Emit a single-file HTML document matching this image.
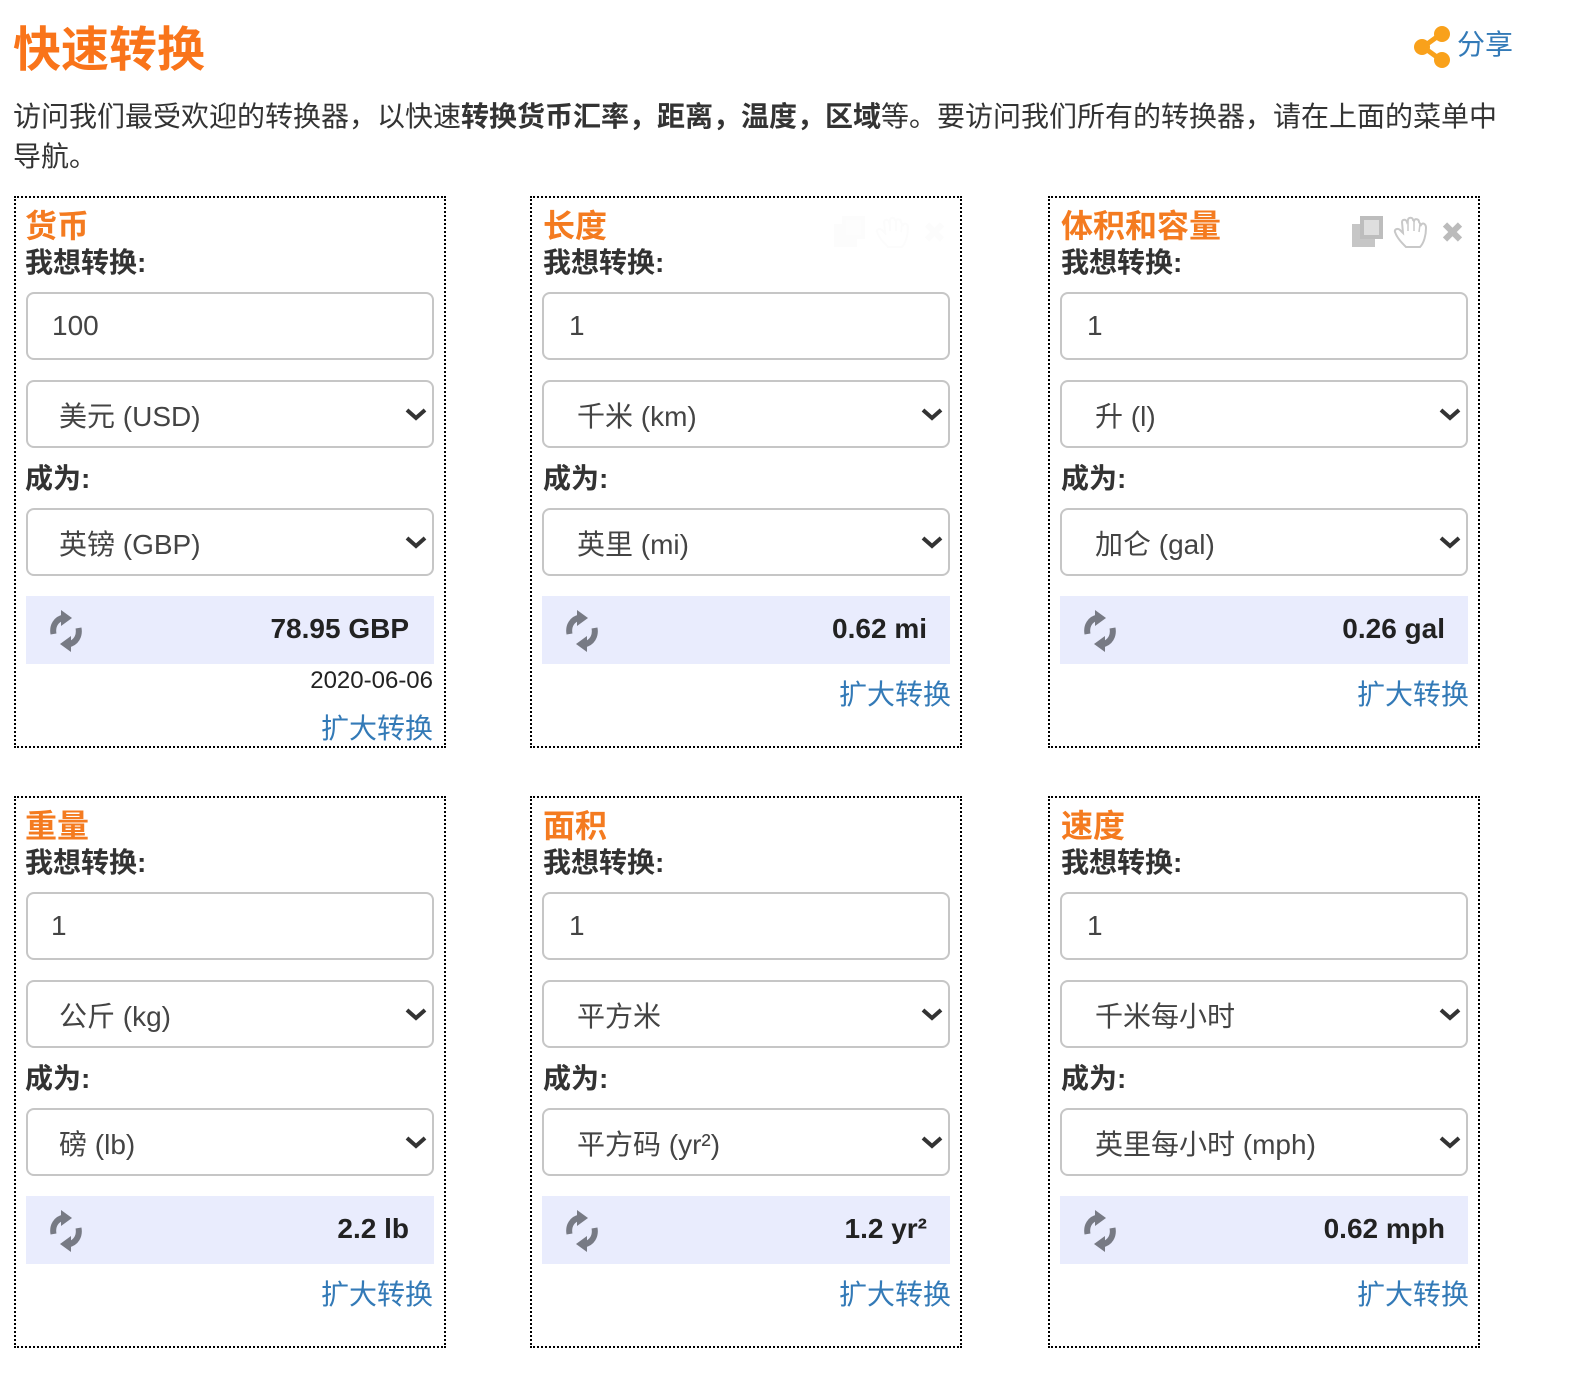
<!DOCTYPE html>
<html lang="zh"><head><meta charset="utf-8"><title>快速转换</title>
<style>
html,body{margin:0;padding:0;background:#fff}
body{width:1574px;height:1382px;position:relative;overflow:hidden;font-family:"Liberation Sans","Noto Sans CJK SC",sans-serif;color:#333}
.a{position:absolute;white-space:nowrap}
h1{position:absolute;margin:0;left:13px;top:22px;font-size:48px;line-height:58px;font-weight:700;color:#f9741a}
.share{left:1457px;top:25px;font-size:28px;line-height:40px;color:#337ab7}
.intro{left:13px;top:97px;width:1505px;font-size:28px;line-height:40px;white-space:normal;color:#333}
.box{position:absolute;width:428px;height:548px;border:2px dotted #000}
.box>*{position:absolute;white-space:nowrap}
.t{left:9px;top:8px;font-size:32px;line-height:40px;font-weight:700;color:#f47b20}
.l{left:9px;font-size:28px;line-height:40px;font-weight:700;color:#333}
.c{left:10px;width:404px;height:64px;border:2px solid #c6c6c6;border-radius:8px;background:#fff;font-size:28px;line-height:64px;color:#444}
.in{text-indent:24px}
.se{height:64px;line-height:70px;text-indent:31px}
.chev{position:absolute;left:377px;top:25px;width:22px;height:14px}
.r{left:10px;top:398px;width:383px;padding-right:25px;height:68px;background:#e9ecfd;text-align:right;font-size:28px;line-height:66px;font-weight:700;color:#222}
.ic{position:absolute;left:24px;top:14px;width:32px;height:42px}
.d{right:11px;top:465px;font-size:24px;line-height:36px;color:#222}
.k{right:9px;top:477px;font-size:28px;line-height:40px;color:#337ab7}
.c2 .t,.c2 .l{left:11px}
.c2 .in{text-indent:25px}
.c2 .se{text-indent:33px}
.c2 .r{width:385px;padding-right:23px}
.c1 .k{right:11px}
.c1 .k.x{top:511px}
</style></head><body>
<svg width="0" height="0" style="position:absolute"><defs>
<g id="chev"><path d="M2 3l9 8 9-8" fill="none" stroke="#333" stroke-width="4"/></g>
<g id="sync">
<path d="M3.500 24C2 16 6 9 14 7.500" fill="none" stroke="#777a84" stroke-width="6"/>
<path d="M11 0L22 8 11 16z" fill="#777a84"/>
<path d="M28.500 18C30 26 26 33 18 34.500" fill="none" stroke="#777a84" stroke-width="6"/>
<path d="M21 42L10 34 21 26z" fill="#777a84"/>
</g>
<g id="tools">
<rect x="4" y="12" width="23" height="23" fill="#c6c6c6"/>
<rect x="12" y="4" width="23" height="23" fill="#bdbdbd"/>
<rect x="16" y="8" width="15" height="15" fill="#dedede"/>
<path d="M58 35C54 31 49 26 47 20 46 17 50 16 52 18L55 21 54 10C54 7 58 7 59 10L60 8C60 5 65 5 65 8L66 9C67 6 71 7 71 10L73 13C75 10 78 12 78 16 78 23 76 31 72 35Z" fill="#fff" stroke="#c8c8c8" stroke-width="2"/>
<path d="M60 9V19M66 9V19M72 12L71 20" fill="none" stroke="#c8c8c8" stroke-width="1.500"/>
<path d="M97 12.500L112 27.500M112 12.500L97 27.500" stroke="#bbb" stroke-width="6"/>
</g>
</defs></svg>

<h1>快速转换</h1>
<svg class="a" style="left:1413px;top:24px" width="40" height="46" viewBox="0 0 40 46"><path d="M10 23L28 10M10 23l18 13" stroke="#f9a11b" stroke-width="5"/><circle cx="29" cy="10" r="8" fill="#f9a11b"/><circle cx="9" cy="23" r="8" fill="#f9a11b"/><circle cx="29" cy="36" r="8" fill="#f9a11b"/></svg>
<div class="a share">分享</div>
<div class="a intro">访问我们最受欢迎的转换器，以快速<b>转换货币汇率，距离，温度，区域</b>等。要访问我们所有的转换器，请在上面的菜单中导航。</div>

<div class="box c1" style="left:14px;top:196px">
<div class="t">货币</div><div class="l" style="top:45px">我想转换:</div>
<div class="c in" style="top:94px">100</div>
<div class="c se" style="top:182px">美元 (USD)<svg class="chev"><use href="#chev"/></svg></div>
<div class="l" style="top:261px">成为:</div>
<div class="c se" style="top:310px">英镑 (GBP)<svg class="chev"><use href="#chev"/></svg></div>
<div class="r"><svg class="ic"><use href="#sync"/></svg>78.95 GBP</div>
<div class="d">2020-06-06</div><div class="k x">扩大转换</div>
</div>

<div class="box c2" style="left:530px;top:196px">
<div class="t">长度</div><div class="l" style="top:45px">我想转换:</div>
<svg style="left:298px;top:14px;opacity:.04" width="120" height="40"><use href="#tools"/></svg>
<div class="c in" style="top:94px">1</div>
<div class="c se" style="top:182px">千米 (km)<svg class="chev"><use href="#chev"/></svg></div>
<div class="l" style="top:261px">成为:</div>
<div class="c se" style="top:310px">英里 (mi)<svg class="chev"><use href="#chev"/></svg></div>
<div class="r"><svg class="ic"><use href="#sync"/></svg>0.62 mi</div>
<div class="k">扩大转换</div>
</div>

<div class="box c2" style="left:1048px;top:196px">
<div class="t">体积和容量</div><div class="l" style="top:45px">我想转换:</div>
<svg style="left:298px;top:14px" width="120" height="40"><use href="#tools"/></svg>
<div class="c in" style="top:94px">1</div>
<div class="c se" style="top:182px">升 (l)<svg class="chev"><use href="#chev"/></svg></div>
<div class="l" style="top:261px">成为:</div>
<div class="c se" style="top:310px">加仑 (gal)<svg class="chev"><use href="#chev"/></svg></div>
<div class="r"><svg class="ic"><use href="#sync"/></svg>0.26 gal</div>
<div class="k">扩大转换</div>
</div>

<div class="box c1" style="left:14px;top:796px">
<div class="t">重量</div><div class="l" style="top:45px">我想转换:</div>
<div class="c in" style="top:94px;text-indent:23px">1</div>
<div class="c se" style="top:182px">公斤 (kg)<svg class="chev"><use href="#chev"/></svg></div>
<div class="l" style="top:261px">成为:</div>
<div class="c se" style="top:310px">磅 (lb)<svg class="chev"><use href="#chev"/></svg></div>
<div class="r"><svg class="ic"><use href="#sync"/></svg>2.2 lb</div>
<div class="k">扩大转换</div>
</div>

<div class="box c2" style="left:530px;top:796px">
<div class="t">面积</div><div class="l" style="top:45px">我想转换:</div>
<div class="c in" style="top:94px">1</div>
<div class="c se" style="top:182px">平方米<svg class="chev"><use href="#chev"/></svg></div>
<div class="l" style="top:261px">成为:</div>
<div class="c se" style="top:310px">平方码 (yr²)<svg class="chev"><use href="#chev"/></svg></div>
<div class="r"><svg class="ic"><use href="#sync"/></svg>1.2 yr²</div>
<div class="k">扩大转换</div>
</div>

<div class="box c2" style="left:1048px;top:796px">
<div class="t">速度</div><div class="l" style="top:45px">我想转换:</div>
<div class="c in" style="top:94px">1</div>
<div class="c se" style="top:182px">千米每小时<svg class="chev"><use href="#chev"/></svg></div>
<div class="l" style="top:261px">成为:</div>
<div class="c se" style="top:310px">英里每小时 (mph)<svg class="chev"><use href="#chev"/></svg></div>
<div class="r"><svg class="ic"><use href="#sync"/></svg>0.62 mph</div>
<div class="k">扩大转换</div>
</div>
</body></html>
